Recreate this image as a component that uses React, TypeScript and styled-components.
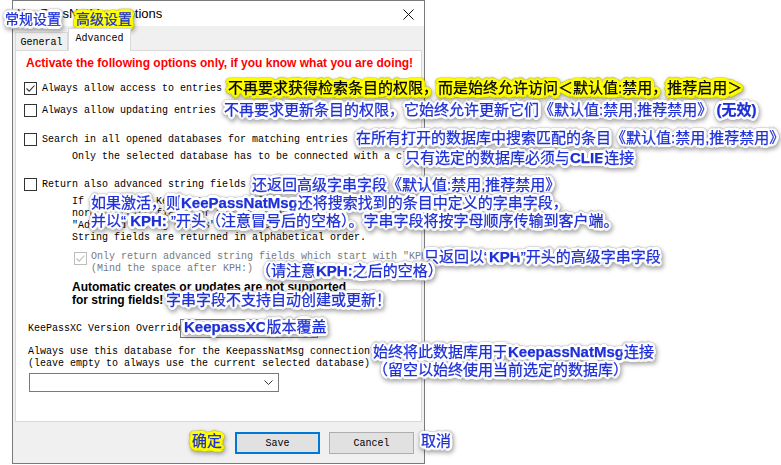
import React from "react";
import styled, { createGlobalStyle, css } from "styled-components";

const GlobalStyle = createGlobalStyle`
  body {
    margin: 0;
    background: #ffffff;
  }
`;

const MONO = `"Liberation Mono", "DejaVu Sans Mono", monospace`;
const SANS = `"Liberation Sans", Arial, sans-serif`;
const NOTE = `"Liberation Sans", "Noto Sans CJK SC", sans-serif`;

// ring of small shadows -> solid halo around the glyphs
const ring = (c: string, r: number) =>
  Array.from({ length: 16 }, (_, i) => {
    const a = (i * Math.PI) / 8;
    return `${(Math.cos(a) * r).toFixed(1)}px ${(Math.sin(a) * r).toFixed(1)}px 1px ${c}`;
  }).join(", ");

const WHITE_HALO = `${ring("#ffffff", 3)}, ${ring("#ffffff", 1.5)}`;
const YELLOW_HALO = `${ring("#ffff00", 3.5)}, ${ring("#ffff00", 1.8)}`;

export default function App() {
  return (
    <>
      <GlobalStyle />
      <Screen>
        <Window>
          <TitleBar>
            <Title>KeePassNatMsg Options</Title>
            <CloseIcon viewBox="0 0 11 11">
              <path d="M0.5 0.5 L10.5 10.5 M10.5 0.5 L0.5 10.5" />
            </CloseIcon>
          </TitleBar>

          <TabStrip>
            <Tab>General</Tab>
            <Tab $active>Advanced</Tab>
          </TabStrip>

          <Panel>
            <Warning>Activate the following options only, if you know what you are doing!</Warning>

            <CheckRow $mt={11}>
              <Box $checked>
                <Check />
              </Box>
              Always allow access to entries
            </CheckRow>
            <CheckRow $mt={8}>
              <Box />
              Always allow updating entries
            </CheckRow>
            <CheckRow $mt={15}>
              <Box />
              Search in all opened databases for matching entries
            </CheckRow>
            <SubText $mt={5}>Only the selected database has to be connected with a client.</SubText>

            <CheckRow $mt={14}>
              <Box />
              Return also advanced string fields
            </CheckRow>
            <SubText $mt={5}>
              If activated, KeePassNatMsg will also return advanced
              <br />
              normal string fields of the found entries,
              <br />
              "Advanced String Fields" of any entry found.
              <br />
              String fields are returned in alphabetical order.
            </SubText>

            <DisabledRow>
              <Box $disabled $checked>
                <Check />
              </Box>
              <span>
                Only return advanced string fields which start with "KPH: "
                <br />
                (Mind the space after KPH:)
              </span>
            </DisabledRow>

            <Notice>
              Automatic creates or updates are not supported
              <br />
              for string fields!
            </Notice>

            <OverrideRow>
              <FieldLabel>KeePassXC Version Override:</FieldLabel>
              <TextBox />
            </OverrideRow>

            <DbText>
              Always use this database for the KeepassNatMsg connection
              <br />
              (leave empty to always use the current selected database)
            </DbText>
            <Combo>
              <Chevron viewBox="0 0 9 5">
                <path d="M0.5 0.5 L4.5 4.5 L8.5 0.5" />
              </Chevron>
            </Combo>
          </Panel>

          <Footer>
            <Button $primary>Save</Button>
            <Button>Cancel</Button>
          </Footer>
        </Window>

        <Note $x={5} $y={10} $small>常规设置</Note>
        <Note $x={76} $y={10} $small $yellow>高级设置</Note>
        <Note $x={228} $y={79} $yellow $dark>
          不再要求获得检索条目的权限，而是始终允许访问＜默认值:禁用，推荐启用＞
        </Note>
        <Note $x={224} $y={101}>
          不再要求更新条目的权限，它始终允许更新它们《默认值:禁用,推荐禁用》 <b>(无效)</b>
        </Note>
        <Note $x={356} $y={129}>在所有打开的数据库中搜索匹配的条目《默认值:禁用,推荐禁用》</Note>
        <Note $x={405} $y={149}>
          只有选定的数据库必须与<b>CLIE</b>连接
        </Note>
        <Note $x={252} $y={176}>还返回高级字串字段《默认值:禁用,推荐禁用》</Note>
        <Note $x={91} $y={194}>
          如果激活，则<b>KeePassNatMsg</b>还将搜索找到的条目中定义的字串字段，
          <br />
          并以“ <b>KPH:</b> ”开头（注意冒号后的空格）。字串字段将按字母顺序传输到客户端。
        </Note>
        <Note $x={424} $y={248}>
          只返回以“<b>KPH</b>”开头的高级字串字段
        </Note>
        <Note $x={256} $y={262}>
          （请注意<b>KPH:</b>之后的空格）
        </Note>
        <Note $x={166} $y={291}>字串字段不支持自动创建或更新！</Note>
        <Note $x={184} $y={318}>
          <b>KeepassXC</b>版本覆盖
        </Note>
        <Note $x={373} $y={343}>
          始终将此数据库用于<b>KeepassNatMsg</b>连接
          <br />
          （留空以始终使用当前选定的数据库）
        </Note>
        <Note $x={192} $y={432} $yellow>确定</Note>
        <Note $x={421} $y={432}>取消</Note>
      </Screen>
    </>
  );
}

const Screen = styled.div`
  position: relative;
  width: 781px;
  height: 465px;
  overflow: hidden;
`;

const Window = styled.div`
  margin-left: 12px;
  width: 413px;
  height: 464px;
  box-sizing: border-box;
  border: 1px solid #7a7a7a;
  background: #f0f0f0;
  display: flex;
  flex-direction: column;
`;

const TitleBar = styled.div`
  height: 25px;
  flex: none;
  background: #ffffff;
  display: flex;
  align-items: center;
  justify-content: space-between;
  padding: 0 10px 0 4px;
`;

const Title = styled.span`
  font-family: ${SANS};
  font-size: 13px;
  color: #000;
`;

const CloseIcon = styled.svg`
  width: 11px;
  height: 11px;
  margin-top: 1px;
  path {
    stroke: #111;
    stroke-width: 1;
    fill: none;
  }
`;

const TabStrip = styled.div`
  height: 24px;
  flex: none;
  display: flex;
  align-items: flex-end;
  padding-left: 2px;
`;

const Tab = styled.div<{ $active?: boolean }>`
  box-sizing: border-box;
  border: 1px solid #d9d9d9;
  border-bottom: none;
  font-family: ${MONO};
  font-size: 10px;
  color: #000;
  display: flex;
  align-items: center;
  justify-content: center;
  height: 18px;
  width: 53px;
  background: #f0f0f0;
  padding-top: 2px;
  ${({ $active }) =>
    $active &&
    css`
      height: 23px;
      width: 63px;
      margin-bottom: -1px;
      background: #ffffff;
      position: relative;
      z-index: 1;
      padding-top: 0;
      padding-bottom: 3px;
    `}
`;

const Panel = styled.div`
  margin: 0 2px;
  height: 372px;
  flex: none;
  box-sizing: border-box;
  border: 1px solid #d9d9d9;
  background: #ffffff;
  padding: 5px 8px 0;
  display: flex;
  flex-direction: column;
  align-items: flex-start;
  font-family: ${MONO};
  font-size: 10px;
  color: #000;
`;

const Warning = styled.div`
  margin-left: 2px;
  font-family: ${SANS};
  font-weight: bold;
  font-size: 12px;
  line-height: 14px;
  color: #ff0000;
  white-space: nowrap;
`;

const CheckRow = styled.div<{ $mt: number }>`
  margin-top: ${({ $mt }) => $mt}px;
  display: flex;
  align-items: center;
  gap: 5px;
  height: 14px;
  white-space: nowrap;
`;

const Box = styled.span<{ $checked?: boolean; $disabled?: boolean }>`
  width: 13px;
  height: 13px;
  box-sizing: border-box;
  border: 1px solid ${({ $disabled }) => ($disabled ? "#bcbcbc" : "#333333")};
  background: #ffffff;
  display: flex;
  align-items: center;
  justify-content: center;
  flex: none;
  svg {
    display: ${({ $checked }) => ($checked ? "block" : "none")};
    stroke: ${({ $disabled }) => ($disabled ? "#bcbcbc" : "#333333")};
  }
`;

const CheckSvg = styled.svg`
  width: 11px;
  height: 11px;
  fill: none;
  stroke-width: 1.1;
`;

const Check = () => (
  <CheckSvg viewBox="0 0 11 11">
    <path d="M1.5 5.5 L4.2 8.2 L9.5 2.5" />
  </CheckSvg>
);

const SubText = styled.div<{ $mt: number }>`
  margin-top: ${({ $mt }) => $mt}px;
  margin-left: 48px;
  line-height: 12px;
  white-space: nowrap;
`;

const DisabledRow = styled.div`
  margin-top: 7px;
  margin-left: 50px;
  display: flex;
  align-items: flex-start;
  gap: 4px;
  line-height: 12px;
  color: #7a7a7a;
  white-space: nowrap;
  ${Box} {
    margin-top: 1px;
  }
`;

const Notice = styled.div`
  margin-top: 6px;
  margin-left: 48px;
  font-family: ${SANS};
  font-weight: bold;
  font-size: 12px;
  line-height: 13px;
  white-space: nowrap;
`;

const OverrideRow = styled.div`
  margin-top: 12px;
  margin-left: 4px;
  display: flex;
  align-items: center;
  height: 18px;
`;

const FieldLabel = styled.span`
  width: 152px;
  overflow: hidden;
  white-space: nowrap;
`;

const TextBox = styled.div`
  width: 138px;
  height: 19px;
  box-sizing: border-box;
  border: 1px solid #7a7a7a;
  background: #ffffff;
`;

const DbText = styled.div`
  margin-top: 9px;
  margin-left: 4px;
  line-height: 12px;
  white-space: nowrap;
`;

const Combo = styled.div`
  margin-top: 3px;
  margin-left: 5px;
  width: 250px;
  height: 19px;
  box-sizing: border-box;
  border: 1px solid #7a7a7a;
  background: #ffffff;
  display: flex;
  align-items: center;
  justify-content: flex-end;
  padding-right: 5px;
`;

const Chevron = styled.svg`
  width: 9px;
  height: 5px;
  path {
    fill: none;
    stroke: #333;
    stroke-width: 1;
  }
`;

const Footer = styled.div`
  flex: 1;
  display: flex;
  justify-content: flex-end;
  align-items: flex-start;
  gap: 9px;
  padding: 10px 10px 0 0;
`;

const Button = styled.div<{ $primary?: boolean }>`
  width: 85px;
  height: 22px;
  box-sizing: border-box;
  display: flex;
  align-items: center;
  justify-content: center;
  background: #e1e1e1;
  border: ${({ $primary }) => ($primary ? "2px solid #0078d7" : "1px solid #adadad")};
  font-family: ${MONO};
  font-size: 10px;
  color: #000;
`;

const Note = styled.span<{
  $x: number;
  $y: number;
  $yellow?: boolean;
  $dark?: boolean;
  $small?: boolean;
}>`
  position: absolute;
  left: ${({ $x }) => $x}px;
  top: ${({ $y }) => $y}px;
  font-family: ${NOTE};
  font-size: ${({ $small }) => ($small ? 14 : 15)}px;
  line-height: 18px;
  white-space: nowrap;
  color: ${({ $dark }) => ($dark ? "#000000" : "#1d2fd8")};
  -webkit-text-stroke: 0.25px currentColor;
  text-shadow: ${({ $yellow }) => ($yellow ? YELLOW_HALO : WHITE_HALO)};
  filter: drop-shadow(0 0 0.6px rgba(0, 0, 0, 0.55)) drop-shadow(1px 2px 2px rgba(0, 0, 0, 0.35));
  b {
    font-weight: bold;
  }
`;
